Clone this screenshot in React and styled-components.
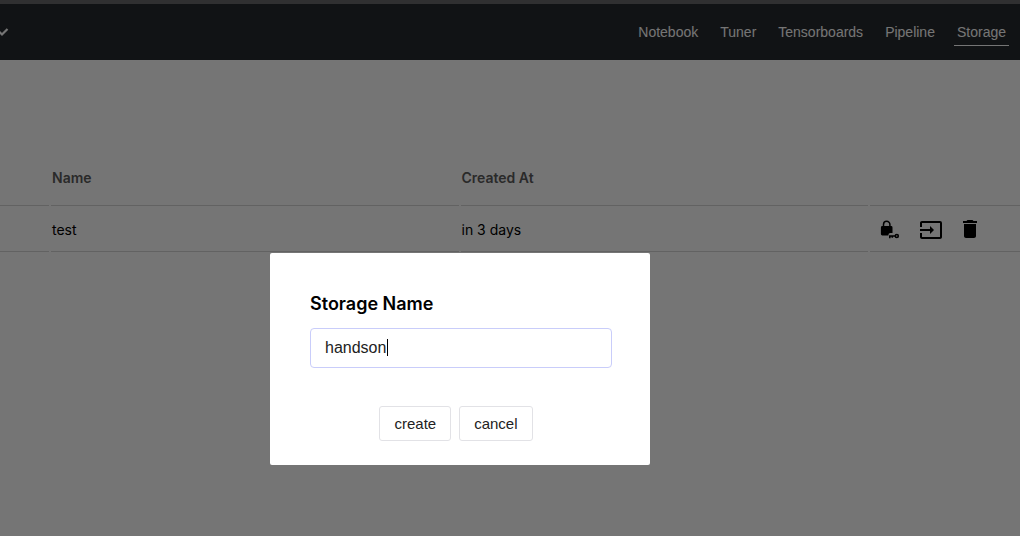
import React, { useState } from "react";
import styled, { createGlobalStyle } from "styled-components";
import { MdDelete, MdInput } from "react-icons/md";

const GlobalStyle = createGlobalStyle`
  * {
    box-sizing: border-box;
  }

  body {
    margin: 0;
    background: #fff;
    color: #000;
    font-family: Inter, sans-serif;
    font-size: 14px;
    overflow: hidden;
  }
`;

const Header = styled.header`
  display: flex;
  align-items: center;
  justify-content: space-between;
  height: 60px;
  padding-right: 11px;
  background: #272a2e;
  border-top: 4px solid #69696c;
`;

const MenuButton = styled.button`
  display: flex;
  padding: 0;
  border: 0;
  background: none;
  color: #fff;
`;

const Nav = styled.nav`
  display: flex;
  gap: 16px;
`;

const NavLink = styled.a`
  padding: 0 3px;
  border-bottom: 1px solid ${({ $active }) => ($active ? "#fff" : "transparent")};
  color: #fff;
  font-family: "Liberation Sans", Arial, sans-serif;
  font-size: 14px;
  line-height: 26px;
  text-decoration: none;
`;

const Table = styled.table`
  width: calc(100% + 4px);
  margin: 88px -2px 0;
  border-spacing: 2px 0;
  table-layout: fixed;
`;

const HeadCell = styled.th`
  width: ${({ $width }) => $width || "auto"};
  height: 58px;
  padding: 2px 1px 0;
  border-bottom: 1px solid #d6d6d6;
  color: #5c5c5c;
  font-weight: 600;
  text-align: left;
`;

const Cell = styled.td`
  height: 46px;
  padding: 2px 1px 0;
  border-bottom: 1px solid #d6d6d6;
`;

const Actions = styled.div`
  display: flex;
  align-items: center;
  gap: 16px;
  padding-left: 8px;
`;

const IconButton = styled.button`
  display: flex;
  padding: 0;
  border: 0;
  background: none;
  color: #000;
`;

const Overlay = styled.div`
  position: fixed;
  inset: 0;
  display: flex;
  align-items: flex-start;
  justify-content: center;
  padding: 253px 100px 0 0;
  background: rgba(0, 0, 0, 0.54);
`;

const Modal = styled.form`
  width: 380px;
  padding: 40px 38px 24px 40px;
  border-radius: 2px;
  background: #fff;
`;

const Title = styled.label`
  display: block;
  margin-bottom: 13px;
  font-size: 18px;
  font-weight: 600;
  line-height: 22px;
`;

const Field = styled.div`
  position: relative;
`;

const TextInput = styled.input`
  display: block;
  width: 100%;
  height: 40px;
  padding: 0 14px;
  border: 1px solid #c9cdfa;
  border-radius: 4px;
  outline: none;
  color: #222;
  caret-color: transparent;
  font-family: "Liberation Sans", Arial, sans-serif;
  font-size: 16px;
`;

const Caret = styled.span`
  position: absolute;
  top: 11px;
  left: 16px;
  height: 17px;
  border-right: 1px solid #000;
  font-family: "Liberation Sans", Arial, sans-serif;
  font-size: 16px;
  pointer-events: none;

  &::before {
    content: attr(data-value);
    visibility: hidden;
    white-space: pre;
  }
`;

const ButtonRow = styled.div`
  display: flex;
  justify-content: center;
  gap: 8px;
  margin-top: 38px;
  padding-right: 10px;
`;

const Button = styled.button`
  height: 35px;
  padding: 0 14px;
  border: 1px solid #e2e2e6;
  border-radius: 3px;
  background: #fff;
  color: #222;
  font-family: "Liberation Sans", Arial, sans-serif;
  font-size: 15px;
`;

const LINKS = ["Notebook", "Tuner", "Tensorboards", "Pipeline", "Storage"];

const ROWS = [{ name: "test", createdAt: "in 3 days" }];

const ChevronIcon = () => (
  <svg width="9" height="12" viewBox="0 0 9 12" fill="none">
    <path d="M-2 4.5L2 8.5L7.5 3" stroke="currentColor" strokeWidth="2.2" />
  </svg>
);

const LockKeyIcon = () => (
  <svg width="24" height="24" viewBox="0 0 24 24" fill="none">
    <path
      d="M4.5 9V6.5a3.2 3.2 0 0 1 6.4 0V9"
      stroke="currentColor"
      strokeWidth="1.5"
    />
    <path
      d="M3.3 8h8.8a1.4 1.4 0 0 1 1.4 1.4V15h-2.2a2 2 0 0 0-1.9 1.9v.6H3.3a1.4 1.4 0 0 1-1.4-1.4V9.400a1.4 1.4 0 0 1 1.4-1.4z"
      fill="currentColor"
    />
    <circle cx="17.8" cy="18" r="1.5" stroke="currentColor" strokeWidth="1.6" />
    <path
      d="M16.3 18h-5.500v2.300M13.300 18v1.800"
      stroke="currentColor"
      strokeWidth="1.6"
    />
  </svg>
);

const App = () => {
  const [name, setName] = useState("handson");
  const [open, setOpen] = useState(true);

  const close = (e) => {
    e.preventDefault();
    setOpen(false);
  };

  return (
    <>
      <GlobalStyle />
      <Header>
        <MenuButton aria-label="Open menu">
          <ChevronIcon />
        </MenuButton>
        <Nav>
          {LINKS.map((link) => (
            <NavLink
              key={link}
              href={`#${link.toLowerCase()}`}
              $active={link === "Storage"}
            >
              {link}
            </NavLink>
          ))}
        </Nav>
      </Header>

      <Table>
        <thead>
          <tr>
            <HeadCell $width="49px" />
            <HeadCell>Name</HeadCell>
            <HeadCell>Created At</HeadCell>
            <HeadCell $width="150px" />
          </tr>
        </thead>
        <tbody>
          {ROWS.map((row) => (
            <tr key={row.name}>
              <Cell />
              <Cell>{row.name}</Cell>
              <Cell>{row.createdAt}</Cell>
              <Cell>
                <Actions>
                  <IconButton aria-label="Permissions">
                    <LockKeyIcon />
                  </IconButton>
                  <IconButton aria-label="Open">
                    <MdInput size={24} />
                  </IconButton>
                  <IconButton aria-label="Delete">
                    <MdDelete size={24} viewBox="1 1 24 24" />
                  </IconButton>
                </Actions>
              </Cell>
            </tr>
          ))}
        </tbody>
      </Table>

      {open && (
        <Overlay>
          <Modal onSubmit={close}>
            <Title htmlFor="storage-name">Storage Name</Title>
            <Field>
              <TextInput
                id="storage-name"
                type="text"
                autoComplete="off"
                value={name}
                onChange={(e) => setName(e.target.value)}
              />
              <Caret data-value={name} />
            </Field>
            <ButtonRow>
              <Button type="submit">create</Button>
              <Button type="button" onClick={close}>
                cancel
              </Button>
            </ButtonRow>
          </Modal>
        </Overlay>
      )}
    </>
  );
};

export default App;
